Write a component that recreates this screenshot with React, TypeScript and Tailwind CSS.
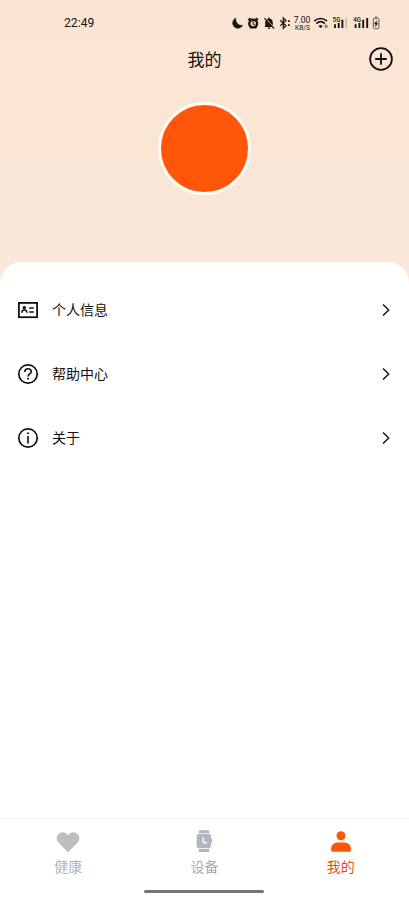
import type { ReactNode } from 'react'

function StatusIcons() {
  return (
    <svg width="150" height="20" viewBox="230 13 150 20" fill="none" stroke="#1a1512">
      {/* do not disturb */}
      <path d="M235.9 18.1a5.3 5.3 0 1 0 6.8 7.2 6 6 0 0 1-6.8-7.2Z" fill="#1a1512" stroke="#1a1512" strokeWidth=".5" />
      {/* alarm */}
      <circle cx="253.2" cy="23.6" r="3.9" strokeWidth="2.4" />
      <path d="M248.2 20.2l2.4-2.1M258.2 20.2l-2.4-2.1M250 28.3l1-1M256.4 28.3l-1-1" strokeWidth="1.6" />
      <path d="M253.1 21.6v2.4l1.5.8" strokeWidth="1.1" />
      {/* muted bell */}
      <path d="M265.2 26v-3.5c0-2.2 1.3-3.7 3.2-4v-.9h1.2v.9c1.9.3 3.2 1.8 3.2 4V26l1.1 1.1h-9.8l1.1-1.1ZM267.6 27.5h2.8c0 .9-.6 1.4-1.4 1.4s-1.4-.5-1.4-1.4Z" fill="#1a1512" stroke="none" />
      <path d="M265.2 17.9l9.6 10.2" stroke="#fbe5d3" strokeWidth=".9" />
      <path d="M264.3 18.2l9.8 10.4" strokeWidth="1.2" />
      {/* bluetooth */}
      <path d="M280.2 20.3l5.8 5.4-2.7 2.6v-10.4l2.7 2.6-5.8 5.4" strokeWidth="1.2" />
      <path d="M288.9 20.2v1.8M288.9 24.2v1.8" strokeWidth="1.7" />
      {/* wifi */}
      <path d="M314.2 21.2c3.8-3.6 9-3.6 12.8 0M316.3 23.6c2.6-2.4 6-2.4 8.6 0" strokeWidth="1.6" />
      <path d="M318.5 25.9c1.3-1.1 2.9-1.1 4.2 0l-2.1 2.3-2.1-2.3Z" fill="#1a1512" stroke="none" />
      <path d="M325.3 24.5v3.6M327 24.8v3.1" strokeWidth=".7" />
      {/* signal bars */}
      <path d="M335 28v-3.8M338.7 28v-5M342.4 28v-8.3" strokeWidth="1.9" />
      <path d="M346.3 28v-9.9" stroke="#c8b5a8" strokeWidth="1.6" />
      <path d="M355.6 28v-3.8M359.4 28v-5M363.2 28v-8.3M367.2 28v-9.9" strokeWidth="1.9" />
      {/* battery */}
      <rect x="373.3" y="18.3" width="5.6" height="10.4" rx="1.2" stroke="#5e5550" />
      <path d="M374.8 17.1h2.6" stroke="#5e5550" strokeWidth="1" />
      <path d="M376.5 20.8l-2 3.3h1.3l-.3 2.7 2.2-3.5h-1.4l.2-2.5Z" fill="#1a1512" stroke="#1a1512" strokeWidth=".4" />
      <g fill="#1a1512" stroke="none" fontFamily="Roboto, sans-serif">
        <text x="293.8" y="23.4" fontSize="8.8" textLength="16.6" lengthAdjust="spacingAndGlyphs">7.00</text>
        <text x="295" y="29.8" fontSize="6.8" textLength="15" lengthAdjust="spacingAndGlyphs">KB/S</text>
        <text x="332.6" y="22.2" fontSize="6.8" fontWeight="500" textLength="7.8" lengthAdjust="spacingAndGlyphs">5G</text>
        <text x="353.3" y="22.2" fontSize="6.8" fontWeight="500" textLength="7.8" lengthAdjust="spacingAndGlyphs">4G</text>
      </g>
    </svg>
  )
}

function ProfileIcon() {
  return (
    <svg width="22" height="22" viewBox="0 0 22 22" fill="none" stroke="#111">
      <rect x="1.9" y="3.9" width="18.2" height="14.3" strokeWidth="1.8" />
      <circle cx="7.3" cy="8.7" r="1.7" fill="#111" stroke="none" />
      <path d="M4.7 13.8c.2-2 1.2-2.7 2.6-2.7s2.5.7 2.7 2.7" strokeWidth="1.5" />
      <path d="M12.2 9h4.6M12.2 13h4.6" strokeWidth="1.6" />
    </svg>
  )
}

function HelpIcon() {
  return (
    <svg width="22" height="22" viewBox="0 0 22 22" fill="none" stroke="#111">
      <circle cx="11" cy="11" r="9.2" strokeWidth="1.7" />
      <path d="M7.8 9c0-1.9 1.3-3.2 3.2-3.2s3.2 1.2 3.2 2.9c0 2.2-3.1 2.4-3.1 4.8" strokeWidth="1.6" />
      <circle cx="11.1" cy="15.8" r="1" fill="#111" stroke="none" />
    </svg>
  )
}

function AboutIcon() {
  return (
    <svg width="22" height="22" viewBox="0 0 22 22" fill="none" stroke="#111">
      <circle cx="11" cy="11" r="9.2" strokeWidth="1.7" />
      <path d="M11 9v7.6" strokeWidth="1.6" />
      <circle cx="11" cy="6.2" r="1" fill="#111" stroke="none" />
    </svg>
  )
}

function HeartIcon() {
  return (
    <svg width="24" height="24" viewBox="0 0 24 24" fill="#bdbec2">
      <path d="M12 22.2 2.6 12.8C.1 10.2.2 6.3 2.5 4c2.4-2.3 6.1-2.2 8.5.2l1 1 1-1c2.4-2.4 6.1-2.5 8.5-.2 2.3 2.3 2.4 6.2-.1 8.8L12 22.2Z" />
    </svg>
  )
}

function WatchIcon() {
  return (
    <svg width="24" height="24" viewBox="0 0 24 24" fill="#b0b5bf">
      <path d="M7.2.2h9.6l.8 2.9H6.4l.8-2.9ZM6.4 19h11.2l-.8 2.9H7.2L6.4 19Z" />
      <rect x="4.6" y="3.8" width="14.4" height="14.5" rx="2.4" />
      <rect x="18.5" y="8.6" width="1.7" height="3.8" rx=".8" />
      <path d="M11.3 7.3v4.6l3.3 1.5" fill="none" stroke="#fff" strokeWidth="1.5" />
    </svg>
  )
}

function UserIcon() {
  return (
    <svg width="24" height="24" viewBox="0 0 24 24" fill="#fb560a">
      <circle cx="12" cy="5.7" r="4.5" />
      <path d="M2 19.8c0-5.2 3-7.4 7-7.4h6c4 0 7 2.2 7 7.4 0 1.2-.8 1.9-1.9 1.9H3.9c-1.1 0-1.9-.7-1.9-1.9Z" />
    </svg>
  )
}

const menu: { label: string; icon: ReactNode }[] = [
  { label: '个人信息', icon: <ProfileIcon /> },
  { label: '帮助中心', icon: <HelpIcon /> },
  { label: '关于', icon: <AboutIcon /> },
]

const tabs: { label: string; icon: ReactNode; color: string }[] = [
  { label: '健康', icon: <HeartIcon />, color: 'text-[#b3b4ba]' },
  { label: '设备', icon: <WatchIcon />, color: 'text-[#a9abb3]' },
  { label: '我的', icon: <UserIcon />, color: 'text-[#e5500f]' },
]

export default function App() {
  return (
    <div className="flex h-[900px] w-[409px] flex-col overflow-hidden bg-[#fae7d9] font-['Noto_Sans_CJK_SC',sans-serif] text-[#111]">
      <header className="h-[262.4px] shrink-0 bg-linear-to-b from-[#fbe4d1] to-[#fae7d9]">
        <div className="flex h-[46px] items-center justify-between pr-[29px] pl-16">
          <span className="font-[Roboto] text-xs tracking-[0.1px]">22:49</span>
          <StatusIcons />
        </div>
        <div className="grid h-[26px] grid-cols-3 items-center px-4">
          <h1 className="col-start-2 text-center text-[17px] leading-6">我的</h1>
          <button className="justify-self-end">
            <svg width="24" height="24" viewBox="0 0 24 24" fill="none" stroke="#111" strokeWidth="1.8">
              <circle cx="12" cy="12" r="10.9" />
              <path d="M12 6.2v11.6M6.2 12h11.6" />
            </svg>
          </button>
        </div>
        <div className="mx-auto mt-[30px] size-[93px] rounded-full border-[3px] border-[#fffaf3] bg-[#ff560a]" />
      </header>

      <main className="flex-1 rounded-t-[21px] bg-white pt-4">
        {menu.map((item) => (
          <button key={item.label} className="flex h-[63.7px] w-full items-center px-[17px]">
            {item.icon}
            <span className="-mt-0.5 ml-[13px] text-sm">{item.label}</span>
            <svg className="ml-auto" width="12" height="14" viewBox="0 0 12 14" fill="none" stroke="#111" strokeWidth="1.4">
              <path d="m3 1.4 5.7 5.6L3 12.6" />
            </svg>
          </button>
        ))}
      </main>

      <nav className="grid h-[82px] grid-cols-3 content-start border-t border-[#f3f3f3] bg-white pt-[11px]">
        {tabs.map((tab) => (
          <a key={tab.label} className={`flex h-[60px] flex-col items-center gap-0.5 text-sm leading-5 ${tab.color}`}>
            {tab.icon}
            {tab.label}
          </a>
        ))}
        <div className="col-span-3 mx-auto h-[3px] w-[120px] rounded-full bg-[#777]" />
      </nav>
    </div>
  )
}
